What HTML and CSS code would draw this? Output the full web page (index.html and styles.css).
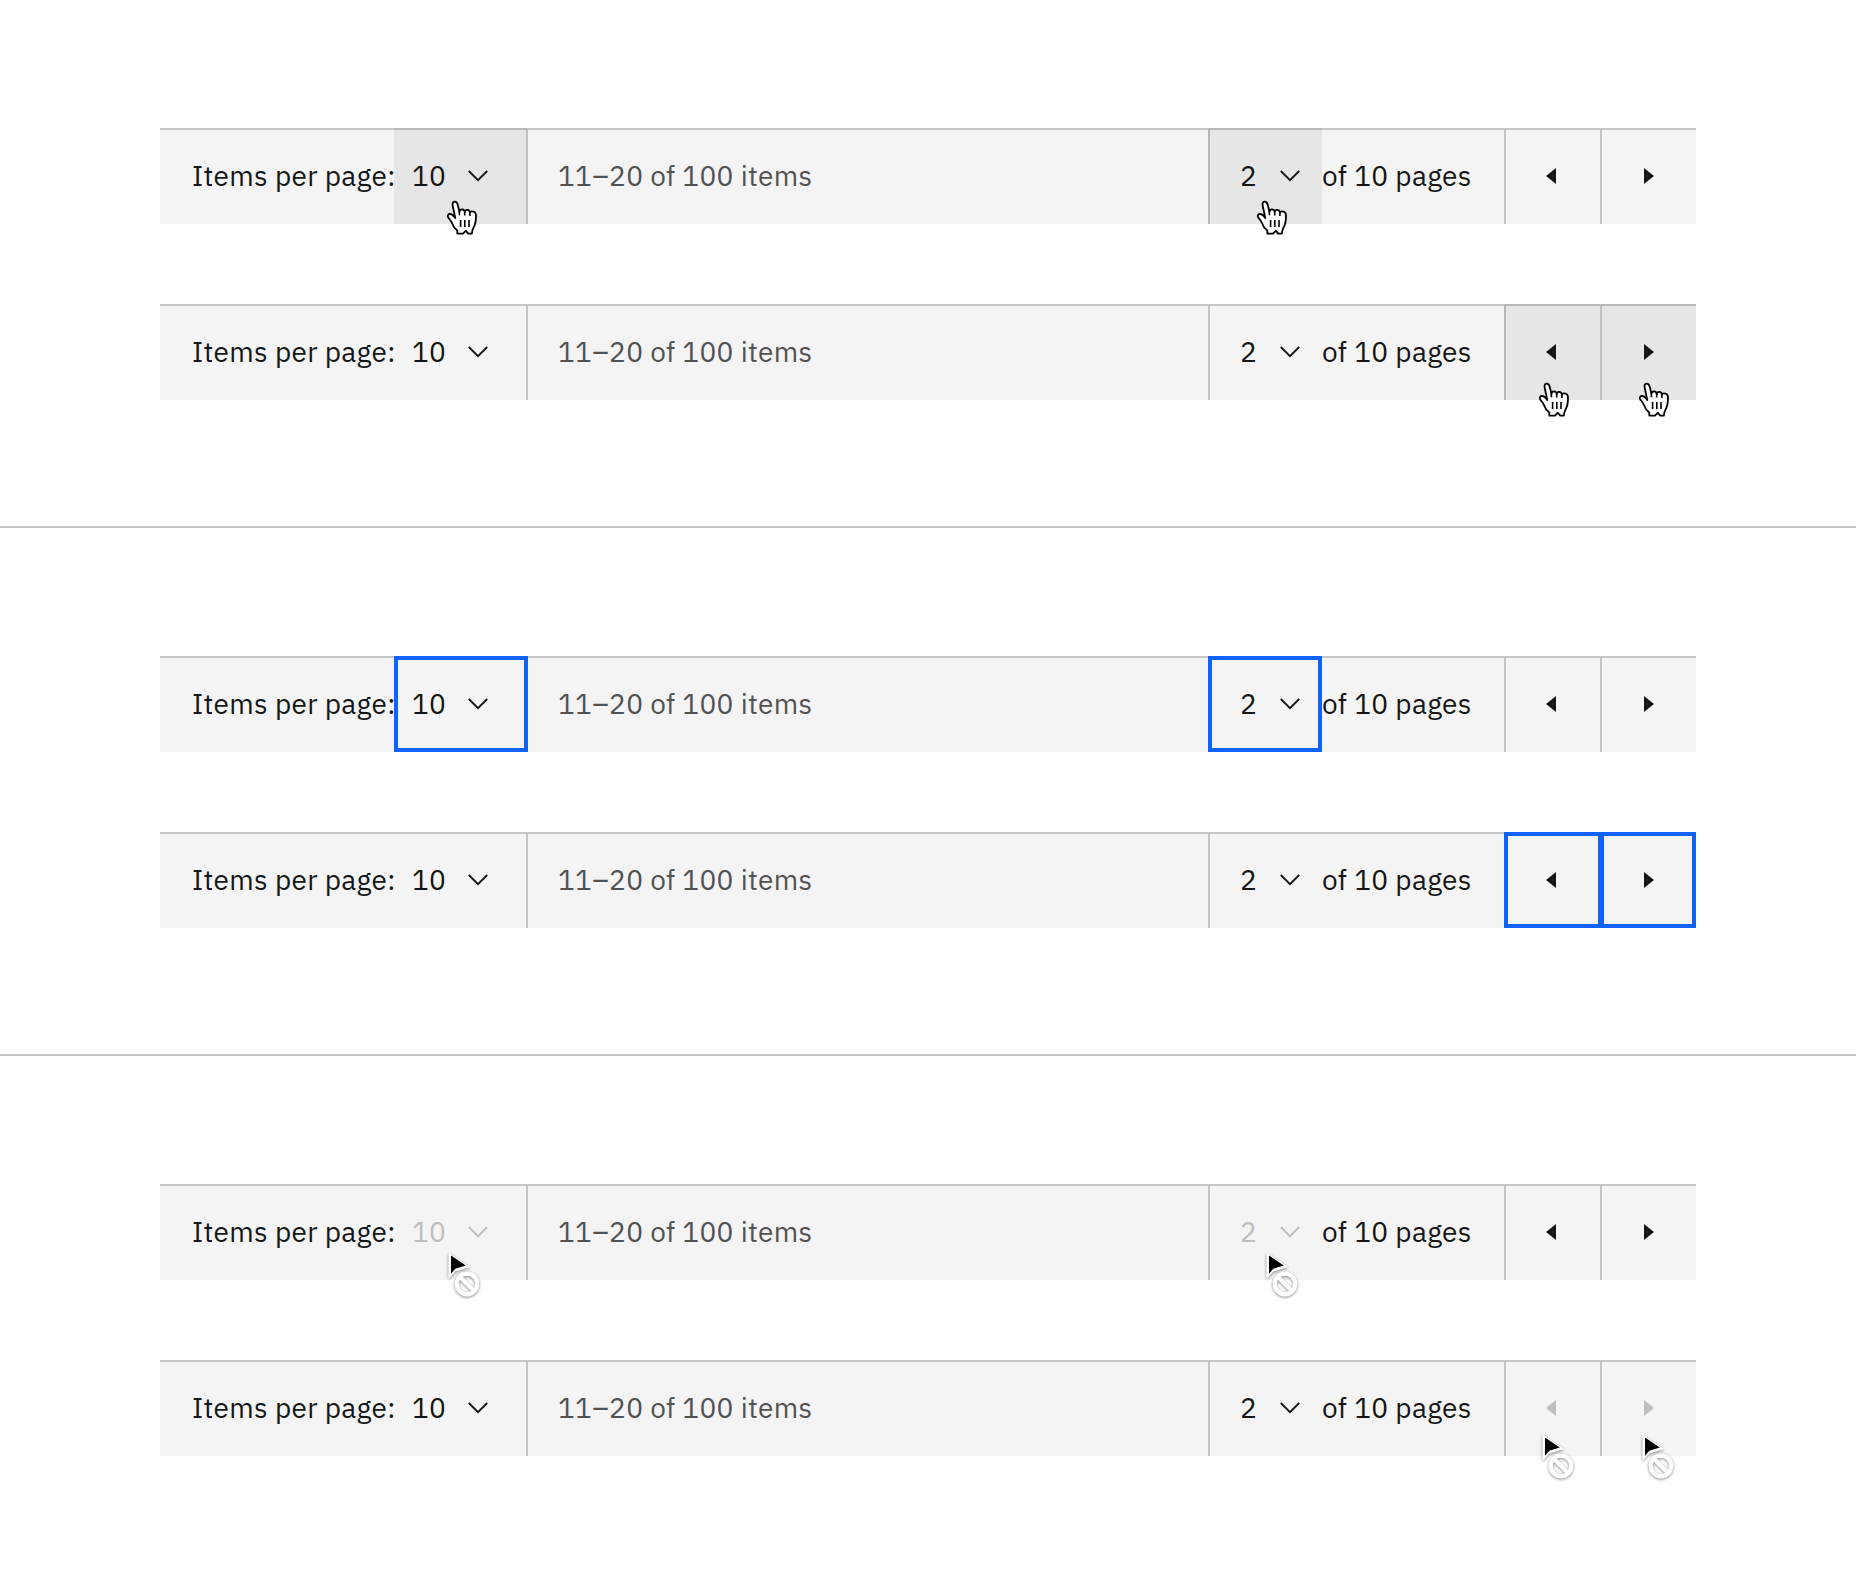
FILE: index.html
```
<!DOCTYPE html>
<html lang="en">
<head>
<meta charset="utf-8">
<title>Pagination states</title>
<link rel="stylesheet" href="styles.css">
</head>
<body>
<svg class="symbols" aria-hidden="true">
  <defs>
    <symbol id="chevron" viewBox="0 0 20 12"><path d="M.8 1 10 10.2 19.2 1" fill="none" stroke="currentColor" stroke-width="1.9"/></symbol>
    <symbol id="caret-left" viewBox="0 0 10 16"><path d="M10 0v16L0 8z" fill="currentColor"/></symbol>
    <symbol id="caret-right" viewBox="0 0 10 16"><path d="M0 0v16l10-8z" fill="currentColor"/></symbol>
    <symbol id="hand" viewBox="0 0 32 36">
      <path d="M11.3 33.6v-3.2C8.600 28.500 6.900 26 5.800 22.700 4.800 20.400 3.600 19.300 2.300 17.600 1.200 16 1.900 14.200 3.700 14c2.200-.2 4 1.600 5.600 4.100L6.700 5.800C6.200 3.400 6.800 1.900 8.400 1.700c1.800-.2 2.900 1.100 3.400 3.300l1.600 6.800c.3-1.700 1.300-2.600 2.700-2.500 1.600.1 2.400 1.100 2.600 2.700.3-1.400 1.200-2.200 2.600-2.100 1.500.1 2.400 1.100 2.600 2.800.5-1 1.300-1.500 2.400-1.300 2.700.3 3.700 2 3.700 4.300 0 4.500-.6 8.500-2.300 11.600-1.100 2-1.800 3.200-1.800 6.300h-3.700l-2.300-2.900-2.900 2.900z" fill="#fff" stroke="#000" stroke-width="1.800" stroke-linejoin="round"/>
      <path d="M13.400 11.500v3.800M18.700 12v3.600M23.900 12.700v3.300M14.600 20v7M18.800 20v7M23 20v7" fill="none" stroke="#000" stroke-width="1.600"/>
    </symbol>
    <symbol id="blocked" viewBox="0 0 36 48">
      <path d="M2.500 2.500v26.300l6.900-7.200L24 17z" fill="#fff"/>
      <path d="M5 5.600v18.200l4.300-5L19.800 15.500z" fill="#000"/>
      <circle cx="21" cy="34" r="10.300" fill="none" stroke="#fff" stroke-width="4.200"/>
      <path d="m14.500 27.500 13 13" stroke="#fff" stroke-width="4"/>
    </symbol>
  </defs>
</svg>
<main id="states"></main>
<script src="pagination.js"></script>
</body>
</html>
```
FILE: styles.css
```
* { box-sizing: border-box; }

body {
  margin: 0;
  background: #fff;
  color: #161616;
  font-family: "IBM Plex Sans", "Noto Sans CJK SC", "Noto Sans", sans-serif;
  font-size: 28px;
  line-height: 40px;
  letter-spacing: .32px;
}

.symbols { position: absolute; width: 0; height: 0; }

.group {
  display: flex;
  flex-direction: column;
  gap: 80px;
  height: 528px;
  padding: 128px 160px 0;
  border-bottom: 2px solid #c6c6c6;
}
.group:last-child { border-bottom: 0; }

.pagination {
  display: grid;
  grid-template-columns: 234px 134px 680px 114px 182px 96px 96px;
  height: 96px;
  background: #f4f4f4;
}

.cell {
  position: relative;
  display: flex;
  align-items: center;
  padding-bottom: 2px;
  border-top: 2px solid #c6c6c6;
  white-space: nowrap;
}
.label { padding-left: 32px; }
.size { padding-left: 18px; border-right: 2px solid #c6c6c6; }
.range { padding-left: 30px; color: #525252; }
.page { padding-left: 30px; border-left: 2px solid #c6c6c6; }
.prev, .next { border-left: 2px solid #c6c6c6; }
.prev { padding-left: 40px; }
.next { padding-left: 42px; }

.chevron { width: 20px; height: 12px; }
.size .value { width: 56px; }
.page .value { width: 40px; }
.caret { width: 10px; height: 16px; }

.hover { background: #e6e6e6; border-color: #b8b8b8; }
.size.hover { border-right-color: #c0c0c0; }
.next.hover { border-left-color: #c0c0c0; }

.focus::after {
  content: "";
  position: absolute;
  inset: -2px 0 0;
  border: 4px solid #0f62fe;
}
.size.focus::after { right: -2px; }
.page.focus::after, .next.focus::after { left: -2px; }
.prev.focus::after { left: -2px; right: -2px; }

.disabled .value, .disabled .chevron, .disabled .caret { color: #bebebe; }

.cursor { position: absolute; z-index: 1; overflow: visible; }
.hand { width: 32px; height: 36px; top: 70px; }
.size .hand { left: 52px; }
.page .hand { left: 46px; }
.prev .hand { left: 32px; top: 76px; }
.next .hand { left: 36px; top: 76px; }

.blocked { width: 36px; height: 48px; top: 64px; filter: drop-shadow(0 1.5px 1.5px rgba(0, 0, 0, .45)); }
.size .blocked { left: 52px; }
.page .blocked { left: 54px; }
.prev .blocked { left: 34px; top: 70px; }
.next .blocked { left: 38px; top: 70px; }
```
FILE: pagination.js
```
const icon = (id, cls) => `<svg class="${cls}"><use href="#${id}"/></svg>`;
const cursors = { hover: 'hand', disabled: 'blocked' };

function row(state, active) {
  const cell = (name, body) => {
    const on = active.includes(name);
    const cursor = on && cursors[state] ? icon(cursors[state], `cursor ${cursors[state]}`) : '';
    return `<div class="cell ${name}${on ? ' ' + state : ''}">${body}${cursor}</div>`;
  };
  return `<div class="pagination">
    ${cell('label', 'Items per page:')}
    ${cell('size', '<span class="value">10</span>' + icon('chevron', 'chevron'))}
    ${cell('range', '11–20 of 100 items')}
    ${cell('page', '<span class="value">2</span>' + icon('chevron', 'chevron'))}
    ${cell('total', 'of 10 pages')}
    ${cell('prev', icon('caret-left', 'caret'))}
    ${cell('next', icon('caret-right', 'caret'))}
  </div>`;
}

document.getElementById('states').innerHTML = ['hover', 'focus', 'disabled']
  .map(s => `<section class="group">${row(s, ['size', 'page'])}${row(s, ['prev', 'next'])}</section>`)
  .join('');
```
